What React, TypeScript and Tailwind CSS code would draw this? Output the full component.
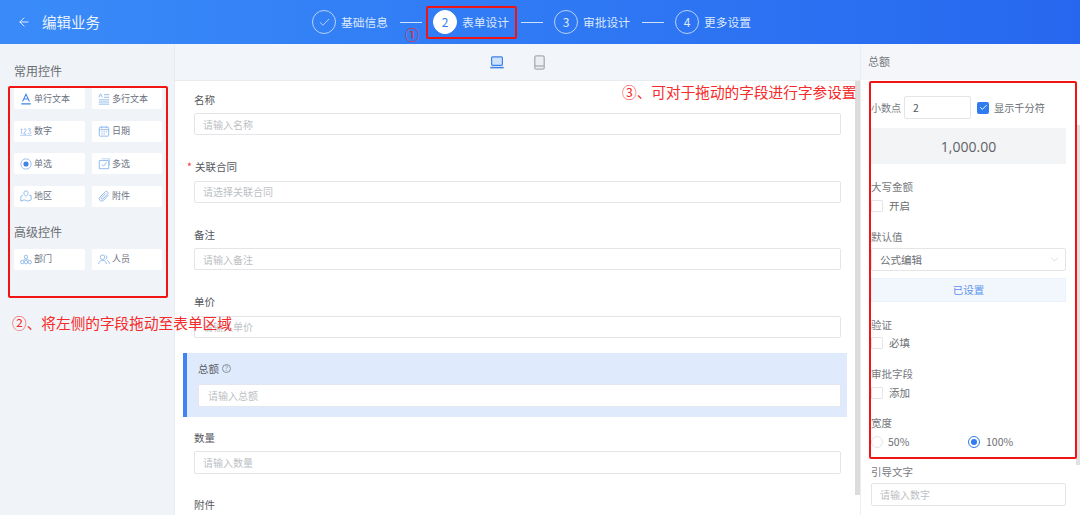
import React from "react";
import { ArrowLeft, Check, ChevronDown } from "lucide-react";

const BL = "#8db8ea";
const I = ({ children }: { children: React.ReactNode }) => (
  <svg width="12" height="12" viewBox="0 0 14 14" fill="none" stroke={BL} strokeWidth="1.1">{children}</svg>
);
const icons: Record<string, React.ReactNode> = {
  text: <svg width="12" height="12" viewBox="0 0 14 14" fill="none" stroke="#3f83e6" strokeWidth="1.2"><path d="M3 10 7 1.5 11 10M4.6 7h4.8M1.5 12.7h11" /></svg>,
  multi: <I><path d="M1 5 3 1l2 4M1 8h12M1 10.5h12M1 13h12M7 2h6M7 5h6" /></I>,
  num: <svg width="12" height="11" viewBox="0 0 18 14" fill="none" stroke={BL} strokeWidth="1.2"><path d="M1 4l1.5-1v8M6 4.5C6 2 9.500 2.500 9 5c-.3 1.500-3 3.500-3.500 6H9.500M12 3h4l-2 3c3 0 3 5 0 5-1 0-2-.5-2-1.500" /><path d="M0 13h18" strokeWidth=".8" /></svg>,
  date: <I><rect x="1.500" y="2.500" width="11" height="10.500" rx="1" /><path d="M1.500 5.500h11M4.500 1v3M9.500 1v3M4 8h1.500M6.500 8H8M9 8h1.500M4 10.500h1.500M6.500 10.500H8" /></I>,
  radio: <svg width="12" height="12" viewBox="0 0 14 14" fill="none"><circle cx="7" cy="7" r="6" stroke={BL} /><circle cx="7" cy="7" r="3" fill="#3f83e6" /></svg>,
  check: <I><path d="M1.500 3H12.500V12.500H1.500Z" /><path d="M4.500 7.500 6.500 9.500 10 5" /><path d="M4 1h9.500v8" strokeWidth=".7" /></I>,
  area: <I><path d="M7 7.500C5 5.500 4.500 4.500 4.500 3.500a2.500 2.500 0 0 1 5 0c0 1-.5 2-2.500 4Z" /><path d="M3.500 6 1 7.500V13l4-1.500 4 1.500 4-1.500V6.500L10.500 6" /></I>,
  clip: <I><path d="M12 6 6.500 12a2.800 2.800 0 0 1-4.200-3.800L8.500 2a2 2 0 0 1 3 2.500L5.500 10.500a1 1 0 0 1-1.500-1.300L9 4" /></I>,
  dept: <svg width="12" height="11" viewBox="0 0 16 14" fill="none" stroke={BL} strokeWidth="1.2"><circle cx="8" cy="3.500" r="2.300" /><circle cx="3" cy="10.500" r="2.300" /><circle cx="8" cy="10.500" r="2.300" /><circle cx="13" cy="10.500" r="2.300" /><path d="M8 6v2M4.500 8.500l2-2.500M11.500 8.500l-2-2.500" /></svg>,
  user: <svg width="12" height="11" viewBox="0 0 16 14" fill="none" stroke={BL} strokeWidth="1.2"><circle cx="6" cy="4" r="3" /><path d="M1 13c0-3 2-5 5-5s5 2 5 5M10 1.200a3 3 0 0 1 0 5.500M12 8c2 .6 3 2.500 3 5" /></svg>,
};

const Ctl = ({ icon, label }: { icon: string; label: string }) => (
  <div className="flex h-[21px] items-center rounded-[2px] bg-white pl-[6px] text-[9px] text-[#6b7280]">
    <span className="flex w-[14px] shrink-0 items-center justify-start">{icons[icon]}</span>
    <span>{label}</span>
  </div>
);

const Step = ({ n, label, active, done }: { n: string; label: string; active?: boolean; done?: boolean }) => (
  <div className="flex items-center gap-[5px]">
    <div className={`flex h-6 w-6 items-center justify-center rounded-full border text-[12px] ${active ? "border-white bg-white text-[#2f7bf0]" : "border-[#b9d2fb] text-[#dfeafd]"}`}>
      {done ? <Check size={13} strokeWidth={1.4} /> : n}
    </div>
    <span className="w-[48px] whitespace-nowrap text-[11.750px] text-[#dce8fc]">{label}</span>
  </div>
);

const Line = () => <div className="mx-[11px] h-px w-[22px] bg-[#cfe0fb]" />;

const Field = ({ label, ph, req, h = "h-[22px]" }: { label: string; ph: string; req?: boolean; h?: string }) => (
  <div className="h-[67.500px] px-[19px]">
    <div className="flex h-[13px] items-center text-[10.500px] text-[#55585e]">
      {req && <span className="mr-[3px] -ml-[7px] text-[#ee3333]">*</span>}
      {label}
    </div>
    {ph && <div className={`mt-[7px] flex ${h} items-center rounded-[2px] border border-[#e3e5e8] bg-white pl-[8px] text-[10px] text-[#bcbfc4]`}>{ph}</div>}
  </div>
);

const Box = ({ label, top }: { label: string; top: string }) => (
  <div className={`flex h-[12px] items-center gap-[6px] ${top}`}>
    <div className="h-[12px] w-[12px] rounded-[1px] border border-[#e3e5e8] bg-white" />
    <span className="text-[10.500px] text-[#6b6e73]">{label}</span>
  </div>
);

const Lbl = ({ children, cls = "" }: { children: React.ReactNode; cls?: string }) => (
  <div className={`flex h-[13px] items-center text-[10.500px] text-[#777a80] ${cls}`}>{children}</div>
);

export default function App() {
  return (
    <div className="relative h-[515px] w-[1080px] overflow-hidden bg-white" style={{ fontFamily: '"Noto Sans CJK SC", "Noto Sans", sans-serif' }}>
      <header className="flex h-11 items-center bg-gradient-to-r from-[#3a8bf9] to-[#2767ef] text-white">
        <div className="flex w-[312px] items-center pl-[17px]">
          <ArrowLeft size={14} strokeWidth={1.5} className="text-[#f2f6ff]" />
          <span className="ml-[11px] text-[14.500px] text-[#eaf2fe]">编辑业务</span>
        </div>
        <div className="flex items-center">
          <Step n="" label="基础信息" done />
          <Line />
          <Step n="2" label="表单设计" active />
          <Line />
          <Step n="3" label="审批设计" />
          <Line />
          <Step n="4" label="更多设置" />
        </div>
      </header>

      <div className="flex h-[471px]">
        <aside className="w-[175px] shrink-0 border-r border-[#e9ecef] bg-[#f0f3f8] pl-[14px] pt-[20px]">
          <div className="flex h-[14px] items-center text-[12px] text-[#6b6e73]">常用控件</div>
          <div className="mt-[10px] grid w-[148px] grid-cols-[71px_70px] gap-x-[7px] gap-y-[11.500px]">
            <Ctl icon="text" label="单行文本" />
            <Ctl icon="multi" label="多行文本" />
            <Ctl icon="num" label="数字" />
            <Ctl icon="date" label="日期" />
            <Ctl icon="radio" label="单选" />
            <Ctl icon="check" label="多选" />
            <Ctl icon="area" label="地区" />
            <Ctl icon="clip" label="附件" />
          </div>
          <div className="mt-[18px] flex h-[14px] items-center text-[12px] text-[#6b6e73]">高级控件</div>
          <div className="mt-[10px] grid w-[148px] grid-cols-[71px_70px] gap-x-[7px]">
            <Ctl icon="dept" label="部门" />
            <Ctl icon="user" label="人员" />
          </div>
        </aside>

        <main className="flex w-[685px] shrink-0 flex-col">
          <div className="flex h-[37px] items-center justify-center gap-[30px] border-b border-[#e9ecef] bg-[#f2f5f9]">
            <svg width="14" height="13" viewBox="0 0 14 13" fill="#cfe2fb" stroke="#3f83e6" strokeWidth="1.200">
              <rect x="1.600" y="0.800" width="10.800" height="8.500" rx="1" />
              <path d="M0.300 11.600h13.400" strokeWidth="1.600" />
            </svg>
            <svg width="11" height="15" viewBox="0 0 11 15" fill="#eceef1" stroke="#a9adb2" strokeWidth="1.300">
              <rect x="0.800" y="0.800" width="9.400" height="13.400" rx="1.500" />
              <path d="M1 11h9" />
            </svg>
          </div>
          <div className="relative flex-1 overflow-hidden pt-[12px]">
            <div className="absolute right-0 top-0 h-[414px] w-[5px] bg-[#dcdcdc]" />
            <div className="w-[685px]">
              <Field label="名称" ph="请输入名称" />
              <Field label="关联合同" ph="请选择关联合同" req />
              <Field label="备注" ph="请输入备注" />
              <Field label="单价" ph="请输入单价" />
              <div className="-mt-[10px] ml-[8px] mr-[13px] h-[64px] border-l-[4px] border-[#3f83f5] bg-[#dfebfc] pl-[11px] pr-[6px] pt-[9px]">
                <div className="flex h-[13px] items-center gap-[3px] text-[10.500px] text-[#5a5e66]">
                  总额
                  <span className="flex h-[9px] w-[9px] items-center justify-center rounded-full border border-[#8b9098] text-[7px] leading-none text-[#8b9098]">?</span>
                </div>
                <div className="mt-[9px] flex h-[23px] items-center rounded-[2px] border border-[#e3e8f0] bg-white pl-[9px] text-[10px] text-[#bcbfc4]">请输入总额</div>
              </div>
              <div className="mt-[14px]">
                <Field label="数量" ph="请输入数量" h="h-[23px]" />
              </div>
              <Field label="附件" ph="" />
            </div>
          </div>
        </main>

        <aside className="relative w-[220px] shrink-0 border-l border-[#eceef1]">
          <div className="h-[36px] bg-[#f5f6f9] pl-[7px] pt-[10px]">
            <div className="flex h-[14px] items-center text-[11px] text-[#777a80]">总额</div>
          </div>
          <div className="absolute right-0 top-[81px] h-[340px] w-[4px] bg-[#e1e1e1]" />
          <div className="box-content w-[195px] pl-[10px]">
            <div className="mt-[16px] flex items-center">
              <span className="w-[33px] text-[10px] text-[#777a80]">小数点</span>
              <div className="flex h-[23px] w-[67px] items-center rounded-[2px] border border-[#e3e5e8] pl-[8px] text-[10.500px] text-[#55585e]">2</div>
              <div className="ml-[6px] flex h-[12px] w-[12px] items-center justify-center rounded-[2px] bg-[#2f7bf0]">
                <Check size={9} strokeWidth={2.500} className="text-white" />
              </div>
              <span className="ml-[5px] text-[10.200px] text-[#6b6e73]">显示千分符</span>
            </div>
            <div className="mt-[9px] flex h-[36px] items-center justify-center bg-[#f3f4f5] text-[14px] text-[#5f6368]" style={{ fontFamily: '"Open Sans", sans-serif' }}>1,000.00</div>
            <Lbl cls="mt-[16px]">大写金额</Lbl>
            <Box label="开启" top="mt-[7px]" />
            <Lbl cls="mt-[18px]">默认值</Lbl>
            <div className="mt-[5px] flex h-[23px] items-center justify-between rounded-[2px] border border-[#e3e5e8] pl-[8px] pr-[4px] text-[10.500px] text-[#6b6e73]">
              公式编辑
              <ChevronDown size={13} strokeWidth={1} className="text-[#bcbfc4]" />
            </div>
            <div className="mt-[7px] flex h-[24px] items-center justify-center border border-[#ecf2fb] bg-[#f2f6fd] text-[10.500px] text-[#5d93ec]">已设置</div>
            <Lbl cls="mt-[16px]">验证</Lbl>
            <Box label="必填" top="mt-[6px]" />
            <Lbl cls="mt-[18px]">审批字段</Lbl>
            <Box label="添加" top="mt-[7px]" />
            <Lbl cls="mt-[17px]">宽度</Lbl>
            <div className="mt-[7px] flex h-[12px] items-center">
              <div className="h-[12px] w-[12px] rounded-full border border-[#e3e5e8]" />
              <span className="ml-[5px] w-[80px] text-[10.500px] text-[#6b6e73]">50%</span>
              <div className="flex h-[12px] w-[12px] items-center justify-center rounded-full border border-[#2f7bf0]">
                <div className="h-[6px] w-[6px] rounded-full bg-[#2f7bf0]" />
              </div>
              <span className="ml-[6px] text-[10.500px] text-[#6b6e73]">100%</span>
            </div>
            <Lbl cls="mt-[17px]">引导文字</Lbl>
            <div className="mt-[5px] flex h-[23px] items-center rounded-[2px] border border-[#e3e5e8] pl-[8px] text-[10px] text-[#bcbfc4]">请输入数字</div>
          </div>
        </aside>
      </div>

      <div className="absolute left-[426px] top-[6px] h-[33px] w-[91px] rounded-[2px] border-[2px] border-[#f01414]" />
      <div className="absolute left-[8px] top-[86px] h-[212px] w-[160px] rounded-[2px] border-[2px] border-[#f01414]" />
      <div className="absolute left-[869px] top-[81px] h-[378px] w-[208px] rounded-[2px] border-[2px] border-[#f01414]" />
      <span className="absolute left-[405px] top-[25px] text-[14px] leading-[18px] text-[#f02020]">①</span>
      <span className="absolute left-[12px] top-[314px] whitespace-nowrap text-[14.670px] leading-[18px] text-[#f52a2a]">②、将左侧的字段拖动至表单区域</span>
      <span className="absolute left-[622px] top-[83px] whitespace-nowrap text-[14.670px] leading-[18px] text-[#f52a2a]">③、可对于拖动的字段进行字参设置</span>
    </div>
  );
}
